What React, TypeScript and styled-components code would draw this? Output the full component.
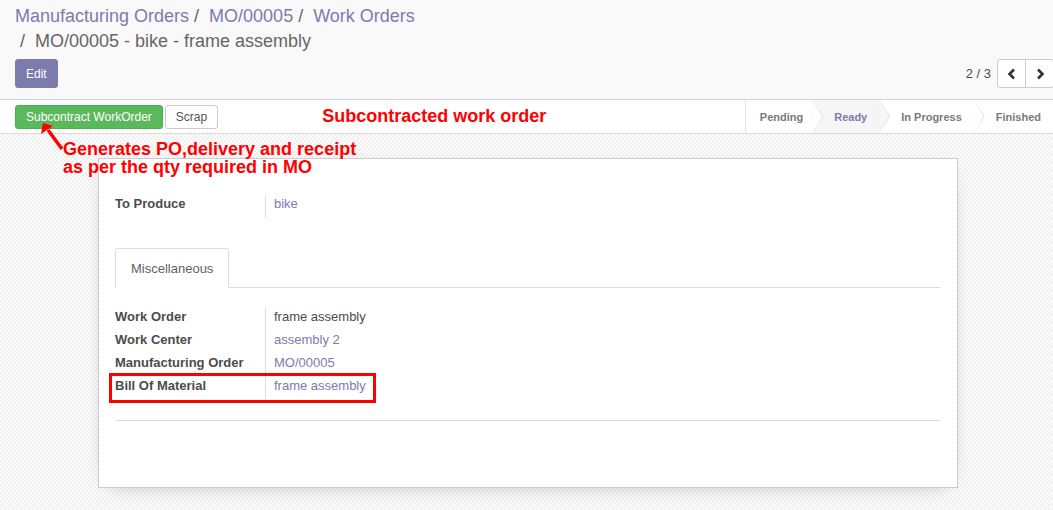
import React from "react";
import styled, { createGlobalStyle } from "styled-components";

const GlobalStyle = createGlobalStyle`
  html, body { margin: 0; padding: 0; }
  body {
    font-family: "Liberation Sans", Arial, sans-serif;
    font-size: 13px;
    color: #4c4c4c;
    background: #f9f9f9;
    overflow: hidden;
  }
  * { box-sizing: border-box; }
`;

const Page = styled.div`
  width: 1053px;
  height: 510px;
  display: flex;
  flex-direction: column;
  position: relative;
  overflow: hidden;
`;

const ControlPanel = styled.div`
  height: 100px;
  background: #f9f9f9;
  border-bottom: 1px solid #d4d4d4;
  padding: 4px 0 0 15px;
  display: flex;
  flex-direction: column;
`;

const Breadcrumb = styled.ol`
  margin: 0;
  padding: 0;
  list-style: none;
  font-size: 18px;
  line-height: 25px;
  width: 420px;
`;

const Crumb = styled.li<{ $active?: boolean; $first?: boolean }>`
  display: inline-block;
  color: ${(p) => (p.$active ? "#666666" : "#7c7bad")};
  &::before {
    content: ${(p) => (p.$first ? "none" : '"/\\00a0"')};
    padding: 0 5px;
    color: #666666;
  }
`;

const PanelRow = styled.div`
  margin-top: 5px;
  display: flex;
  align-items: center;
  justify-content: space-between;
  height: 29px;
`;

const EditButton = styled.button`
  height: 29px;
  padding: 0 10px;
  border: 1px solid #7c7bad;
  border-radius: 3px;
  background: #7c7bad;
  color: #ffffff;
  font-family: inherit;
  font-size: 12px;
`;

const Pager = styled.div`
  display: flex;
  align-items: center;
  gap: 6px;
  margin-right: -1px;
`;

const PagerValue = styled.span`
  font-size: 13px;
  color: #4c4c4c;
`;

const PagerGroup = styled.div`
  display: flex;
`;

const PagerButton = styled.button<{ $first?: boolean }>`
  width: 29px;
  height: 29px;
  display: flex;
  align-items: center;
  justify-content: center;
  background: #ffffff;
  border: 1px solid #cccccc;
  border-radius: ${(p) => (p.$first ? "3px 0 0 3px" : "0 3px 3px 0")};
  margin-left: ${(p) => (p.$first ? "0" : "-1px")};
  padding: 0;
`;

const StatusBar = styled.div`
  height: 34px;
  background: #ffffff;
  border-bottom: 1px solid #d9d9d9;
  display: flex;
  align-items: center;
  padding-left: 15px;
`;

const ActionButton = styled.button<{ $primary?: boolean }>`
  height: 24px;
  padding: 0 10px;
  margin-right: 2px;
  font-family: inherit;
  font-size: 12px;
  border-radius: 3px;
  border: 1px solid ${(p) => (p.$primary ? "#4cae4c" : "#cccccc")};
  background: ${(p) => (p.$primary ? "#5cb85c" : "#ffffff")};
  color: ${(p) => (p.$primary ? "#ffffff" : "#555555")};
`;

const Heading = styled.span`
  margin-left: 102px;
  color: #ff0000;
  font-weight: bold;
  font-size: 18px;
`;

const Steps = styled.div`
  margin-left: auto;
  display: flex;
  height: 100%;
  border-left: 1px solid #e2e2e2;
`;

const Step = styled.div<{ $active?: boolean; $first?: boolean; $last?: boolean }>`
  position: relative;
  display: flex;
  align-items: center;
  height: 100%;
  padding: ${(p) => (p.$first ? "0 9px 0 14px" : "0 12px 0 22px")};
  font-size: 11px;
  font-weight: bold;
  color: ${(p) => (p.$active ? "#7c7bad" : "#7a7a7a")};
  background: ${(p) => (p.$active ? "#f6f6f6" : "#ffffff")};
  &::before,
  &::after {
    content: ${(p) => (p.$last ? "none" : '""')};
    position: absolute;
    top: 0;
    height: 100%;
    clip-path: polygon(0 0, 100% 50%, 0 100%);
    z-index: 1;
  }
  &::before {
    right: -11px;
    width: 11px;
    background: #dcdcdc;
  }
  &::after {
    right: -10px;
    width: 10px;
    background: ${(p) => (p.$active ? "#f6f6f6" : "#ffffff")};
  }
`;

const Content = styled.div`
  flex: 1;
  background-color: #f6f6f6;
  background-image: repeating-conic-gradient(#f1f1f1 0 25%, #fbfbfb 0 50%);
  background-size: 4px 4px;
  padding-top: 24px;
`;

const Sheet = styled.div`
  width: 860px;
  margin-left: 98px;
  background: #ffffff;
  border: 1px solid #c9ccd4;
  box-shadow: 0 5px 20px -12px rgba(0, 0, 0, 0.4);
  padding: 36px 16px 66px 16px;
`;

const Rows = styled.div`
  display: flex;
  flex-direction: column;
`;

const Row = styled.div`
  position: relative;
  display: grid;
  grid-template-columns: 150px 1fr;
  height: 23px;
  line-height: 17px;
`;

const Label = styled.div`
  font-weight: bold;
  color: #4c4c4c;
`;

const Value = styled.div<{ $link?: boolean }>`
  border-left: 1px solid #dddddd;
  padding-left: 8px;
  color: ${(p) => (p.$link ? "#7c7bad" : "#4c4c4c")};
`;

const Highlight = styled.div`
  position: absolute;
  left: -6px;
  top: -4px;
  width: 267px;
  height: 30px;
  border: 3px solid #ff0000;
  pointer-events: none;
`;

const TabBar = styled.div`
  margin-top: 30px;
  display: flex;
  border-bottom: 1px solid #dddddd;
`;

const Tab = styled.div`
  height: 40px;
  margin-bottom: -1px;
  padding: 0 15px;
  display: flex;
  align-items: center;
  border: 1px solid #dddddd;
  border-bottom-color: #ffffff;
  border-radius: 3px 3px 0 0;
  background: #ffffff;
  color: #5f5f5f;
`;

const TabContent = styled.div`
  margin-top: 20px;
`;

const Divider = styled.div`
  margin-top: 20px;
  border-top: 1px solid #dddddd;
`;

const Note = styled.div`
  position: absolute;
  left: 63px;
  top: 140px;
  color: #ff0000;
  font-weight: bold;
  font-size: 18px;
  line-height: 18px;
  z-index: 2;
`;

const Arrow = styled.svg`
  position: absolute;
  left: 35px;
  top: 118px;
  z-index: 2;
`;

const Chevron = ({ dir }: { dir: "left" | "right" }) => (
  <svg width="10" height="12" viewBox="0 0 10 12">
    <polyline
      points={dir === "left" ? "7,1.5 2.5,6 7,10.5" : "3,1.5 7.5,6 3,10.5"}
      fill="none"
      stroke="#333333"
      strokeWidth="2.6"
    />
  </svg>
);

export default function App() {
  return (
    <Page>
      <GlobalStyle />
      <ControlPanel>
        <Breadcrumb>
          <Crumb $first>Manufacturing Orders</Crumb>
          <Crumb>MO/00005</Crumb>
          <Crumb>Work Orders</Crumb>
          <Crumb $active>MO/00005 - bike - frame assembly</Crumb>
        </Breadcrumb>
        <PanelRow>
          <EditButton>Edit</EditButton>
          <Pager>
            <PagerValue>2 / 3</PagerValue>
            <PagerGroup>
              <PagerButton $first>
                <Chevron dir="left" />
              </PagerButton>
              <PagerButton>
                <Chevron dir="right" />
              </PagerButton>
            </PagerGroup>
          </Pager>
        </PanelRow>
      </ControlPanel>
      <StatusBar>
        <ActionButton $primary>Subcontract WorkOrder</ActionButton>
        <ActionButton>Scrap</ActionButton>
        <Heading>Subcontracted work order</Heading>
        <Steps>
          <Step $first>Pending</Step>
          <Step $active>Ready</Step>
          <Step>In Progress</Step>
          <Step $last>Finished</Step>
        </Steps>
      </StatusBar>
      <Content>
        <Sheet>
          <Rows>
            <Row>
              <Label>To Produce</Label>
              <Value $link>bike</Value>
            </Row>
          </Rows>
          <TabBar>
            <Tab>Miscellaneous</Tab>
          </TabBar>
          <TabContent>
            <Rows>
              <Row>
                <Label>Work Order</Label>
                <Value>frame assembly</Value>
              </Row>
              <Row>
                <Label>Work Center</Label>
                <Value $link>assembly 2</Value>
              </Row>
              <Row>
                <Label>Manufacturing Order</Label>
                <Value $link>MO/00005</Value>
              </Row>
              <Row>
                <Label>Bill Of Material</Label>
                <Value $link>frame assembly</Value>
                <Highlight />
              </Row>
            </Rows>
          </TabContent>
          <Divider />
        </Sheet>
      </Content>
      <Note>
        Generates PO,delivery and receipt
        <br />
        as per the qty required in MO
      </Note>
      <Arrow width="35" height="40" viewBox="0 0 35 40">
        <line x1="27" y1="31" x2="13" y2="12" stroke="#ff0000" strokeWidth="3.5" />
        <polygon points="8,5 6,16 18,8" fill="#ff0000" />
      </Arrow>
    </Page>
  );
}
